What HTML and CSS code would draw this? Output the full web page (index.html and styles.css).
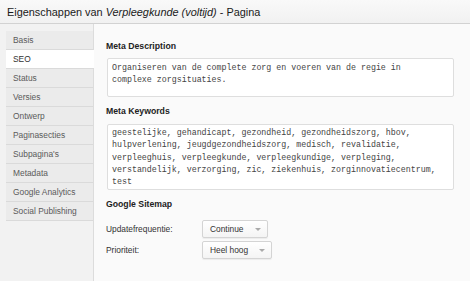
FILE: index.html
```html
<!DOCTYPE html>
<html lang="nl">
<head>
<meta charset="UTF-8">
<title>Eigenschappen van Verpleegkunde (voltijd) - Pagina</title>
<link rel="stylesheet" href="styles.css">
</head>
<body>

<div id="header">
    Eigenschappen van <i>Verpleegkunde (voltijd)</i> - Pagina
</div>

<div id="main">
    <ul id="tabs">
        <li>Basis</li>
        <li class="active">SEO</li>
        <li>Status</li>
        <li>Versies</li>
        <li>Ontwerp</li>
        <li>Paginasecties</li>
        <li>Subpagina's</li>
        <li>Metadata</li>
        <li>Google Analytics</li>
        <li>Social Publishing</li>
    </ul>

    <div id="content">
        <h2>Meta Description</h2>
        <div class="textbox desc">Organiseren van de complete zorg en voeren van de regie in
complexe zorgsituaties.</div>

        <h2>Meta Keywords</h2>
        <div class="textbox keys">geestelijke, gehandicapt, gezondheid, gezondheidszorg, hbov,
hulpverlening, jeugdgezondheidszorg, medisch, revalidatie,
verpleeghuis, verpleegkunde, verpleegkundige, verpleging,
verstandelijk, verzorging, zic, ziekenhuis, zorginnovatiecentrum,
test</div>

        <h2 class="sitemap">Google Sitemap</h2>
        <div class="row">
            <label>Updatefrequentie:</label>
            <div class="select">Continue <span class="arrow"></span></div>
        </div>
        <div class="row">
            <label>Prioriteit:</label>
            <div class="select">Heel hoog <span class="arrow"></span></div>
        </div>
    </div>
</div>

</body>
</html>
```

FILE: styles.css
```css
body {
    margin: 0;
    background: #fafafa;
    font-family: "Liberation Sans", Arial, sans-serif;
    color: #333;
}
#header {
    height: 23px;
    line-height: 24px;
    padding-left: 7px;
    font-size: 10.9px;
    color: #1a1a1a;
    background: linear-gradient(#f9f9f9, #f1f1f1);
    border-bottom: 1px solid #d2d2d2;
}
#main {
    display: flex;
    height: 257px;
}
#tabs {
    list-style: none;
    margin: 0;
    padding: 7px 0 0 6px;
    width: 87px;
    background: #f2f2f2;
    border-right: 1px solid #dcdcdc;
}
#tabs li {
    height: 18px;
    line-height: 18px;
    padding-left: 7px;
    font-size: 8.4px;
    color: #5a5a5a;
    background: #ebebeb;
    border-bottom: 1px solid #dadada;
}
#tabs li.active {
    background: #fff;
    color: #333;
    margin-right: -1px;
}
#content {
    flex: 1;
    padding: 16px 0 0 12px;
}
h2 {
    margin: 0 0 6px 0;
    font-size: 8.7px;
    line-height: 12px;
    font-weight: bold;
    color: #222;
}
.textbox {
    width: 337px;
    margin-left: 1px;
    padding: 3px 4px;
    background: #fff;
    border: 1px solid #dedede;
    border-radius: 2px;
    font-family: "Liberation Mono", "Courier New", monospace;
    font-size: 8.3px;
    line-height: 12.3px;
    color: #444;
    white-space: pre;
}
.desc {
    height: 31px;
    margin-bottom: 8px;
}
.keys {
    height: 59px;
    padding-top: 2px;
    margin-top: 7px;
}
h2.sitemap {
    margin-top: 8px;
    margin-bottom: 10px;
}
.row {
    display: flex;
    align-items: center;
    height: 18px;
    margin-bottom: 3px;
}
.row label {
    width: 96px;
    font-size: 8.4px;
    color: #333;
}
.select {
    display: flex;
    align-items: center;
    height: 16px;
    padding: 0 6px 0 7px;
    border: 1px solid #d4d4d4;
    border-radius: 2px;
    background: linear-gradient(#fff, #f4f4f4);
    box-shadow: 0 1px 1px rgba(0, 0, 0, 0.06);
    font-size: 8.4px;
    color: #333;
}
.arrow {
    margin-left: 11px;
    width: 0;
    height: 0;
    border-left: 3px solid transparent;
    border-right: 3px solid transparent;
    border-top: 3px solid #aaa;
}
```
